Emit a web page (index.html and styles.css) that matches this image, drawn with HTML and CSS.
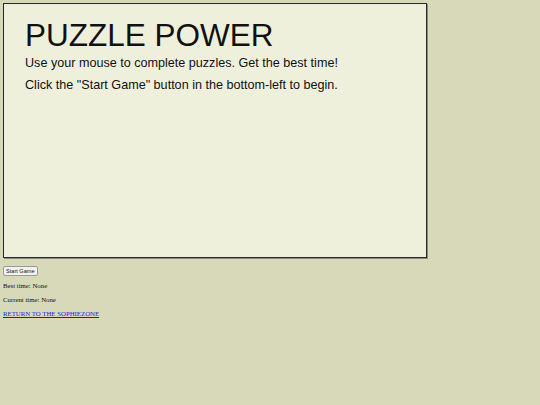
FILE: index.html
```html
<!DOCTYPE html>
<html>
<head>
<meta charset="utf-8">
<link rel="stylesheet" href="styles.css">
</head>
<body>
<div class="game">
  <h1 class="title">PUZZLE POWER</h1>
  <p class="line">Use your mouse to complete puzzles. Get the best time!</p>
  <p class="line">Click the "Start Game" button in the bottom-left to begin.</p>
</div>
<button class="start">Start Game</button>
<p class="info">Best time: None</p>
<p class="info">Current time: None</p>
<p class="info"><a href="#" class="back">RETURN TO THE SOPHIEZONE</a></p>
</body>
</html>
```
FILE: styles.css
```css
html, body {
  background: #d8d9b9;
}
body {
  margin: 3px;
  font-family: "Liberation Serif", serif;
}
.game {
  box-sizing: border-box;
  width: 424px;
  height: 255px;
  background: #eef0dc;
  border: 1px solid #2a2a2a;
  box-shadow: 1px 1px 0 #8a8a78;
  padding: 15px 21px;
  font-family: "Liberation Sans", Arial, sans-serif;
  color: #111;
}
.title {
  margin: 0;
  font-size: 31.5px;
  font-weight: normal;
  line-height: 33px;
}
.line {
  margin: 0;
  font-size: 12.6px;
  line-height: 22px;
}
.start {
  display: block;
  margin: 8px 0 0;
  padding: 0 2px;
  height: 10px;
  font-family: "Liberation Sans", Arial, sans-serif;
  font-size: 5.6px;
  line-height: 8px;
  background: #f2f2f0;
  border: 1px solid #9a9a9a;
  border-radius: 2px;
  color: #111;
}
.info {
  margin: 4.5px 0 0;
  font-size: 6.8px;
  line-height: 9.5px;
  color: #111;
}
.back {
  color: #1a1aee;
}
```
